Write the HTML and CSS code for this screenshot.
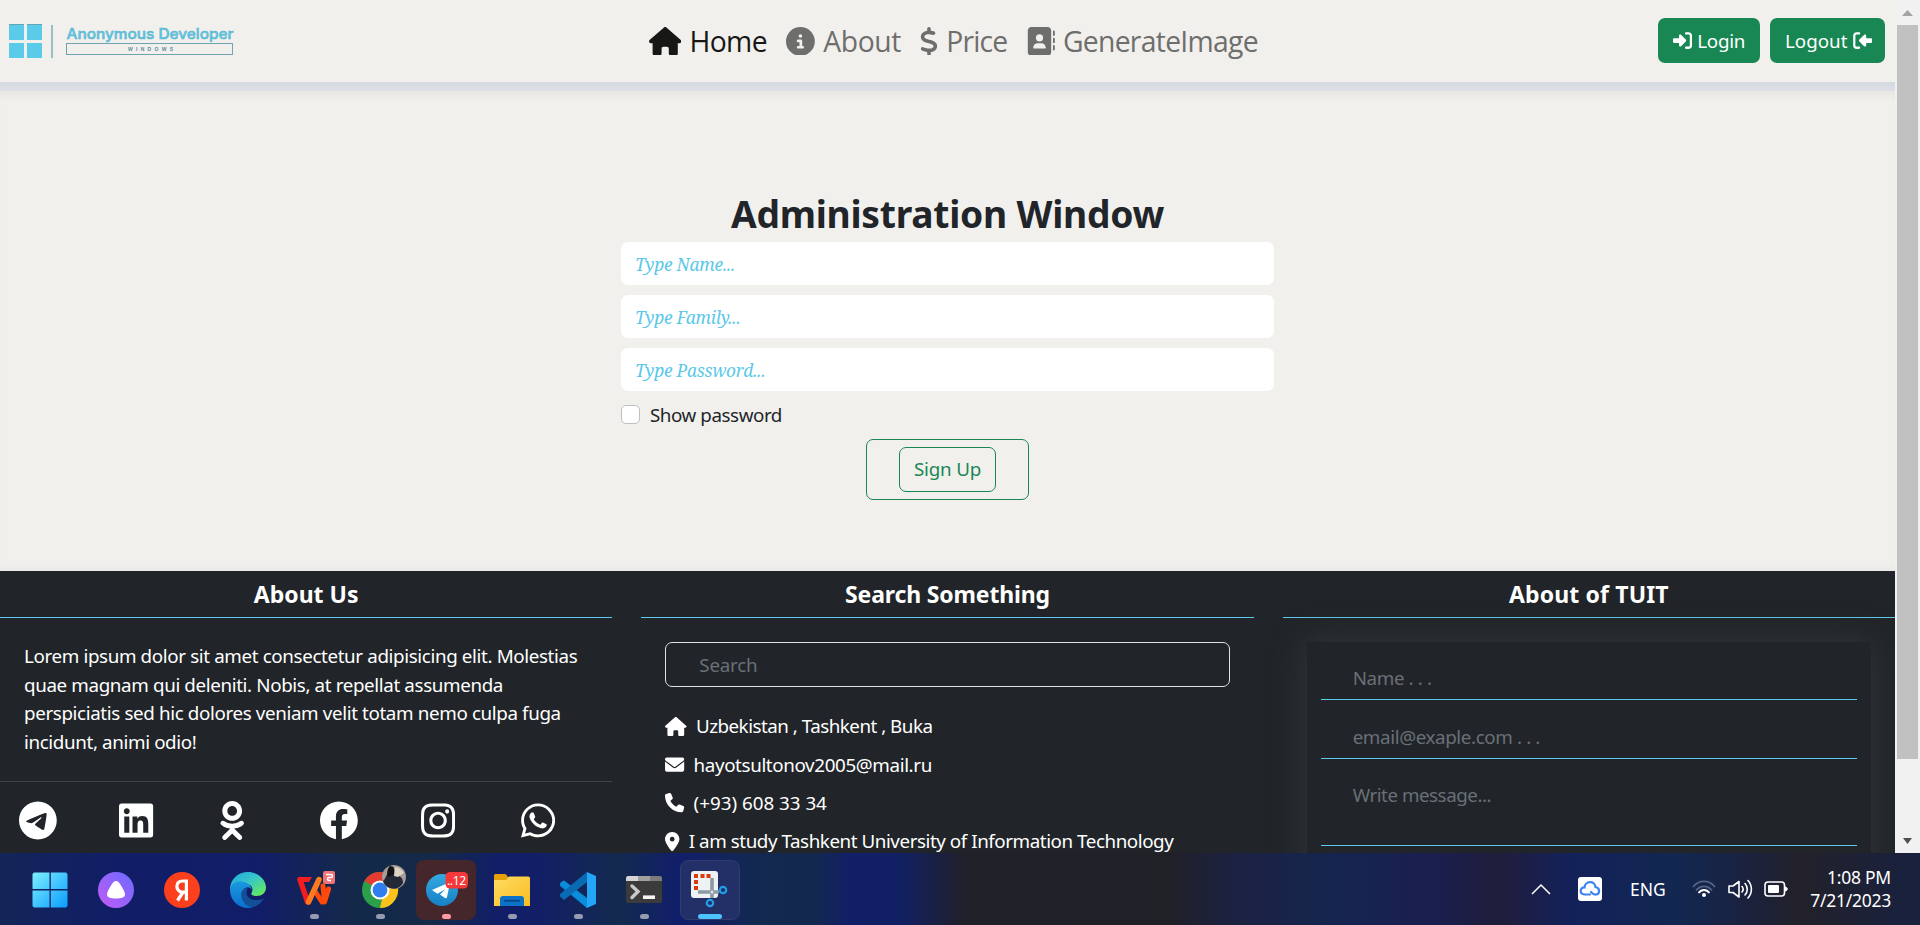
FILE: index.html
```html
<!DOCTYPE html>
<html lang="en">
<head>
<meta charset="utf-8">
<title>Anonymous Developer</title>
<link rel="stylesheet" href="styles.css">
</head>
<body>
<div class="viewport">
<div class="page">
<header class="topbar">
  <a class="logo">
    <svg width="230" height="36" viewBox="0 0 230 36">
      <g fill="#5bcbea"><path d="M0 1h15v15H0zM18 1h15v15H18zM0 19h15v15H0zM18 19h15v15H18z"/></g>
      <path d="M0 .5h15M18 .5h15" stroke="#63a5b6"/>
      <path d="M43 1v33" stroke="#7fb3c1" stroke-width="1.6"/>
      <text class="logo-name" x="57.5" y="15" textLength="167" lengthAdjust="spacingAndGlyphs">Anonymous Developer</text>
      <rect x="57.5" y="19.5" width="166" height="11" fill="none" stroke="#6fa3b1"/>
      <text class="logo-sub" x="119" y="27.2" textLength="45">WINDOWS</text>
    </svg>
  </a>
  <nav class="nav">
    <a class="nav-link active"><svg class="fa" viewBox="0 0 576 512"><path d="M575.8 255.5c0 18-15 32.1-32 32.1h-32l.7 160.2c0 2.7-.2 5.4-.5 8.1V472c0 22.1-17.9 40-40 40H456c-1.1 0-2.2 0-3.3-.1c-1.4 .1-2.8 .1-4.2 .1H416 392c-22.1 0-40-17.9-40-40V448 384c0-17.700-14.300-32-32-32H256c-17.700 0-32 14.300-32 32v64 24c0 22.100-17.900 40-40 40H160 128.100c-1.500 0-3-.1-4.500-.2c-1.200 .1-2.400 .2-3.600 .2H104c-22.100 0-40-17.900-40-40V360c0-.9 0-1.900 .1-2.800V287.600H32c-18 0-32-14-32-32.100c0-9 3-17 10-24L266.400 8c7-7 15-8 22-8s15 2 21 7L564.800 231.500c8 7 12 15 11 24z"/></svg><span class="t-home">Home</span></a>
    <a class="nav-link"><svg class="fa" viewBox="0 0 512 512"><path d="M256 512A256 256 0 1 0 256 0a256 256 0 1 0 0 512zM216 336h24V272H216c-13.300 0-24-10.700-24-24s10.700-24 24-24h48c13.300 0 24 10.700 24 24v88h8c13.300 0 24 10.700 24 24s-10.700 24-24 24H216c-13.300 0-24-10.700-24-24s10.700-24 24-24zm40-208a32 32 0 1 1 0 64 32 32 0 1 1 0-64z"/></svg><span class="t-about">About</span></a>
    <a class="nav-link"><svg class="fa" viewBox="0 0 320 512"><path d="M160 0c17.700 0 32 14.300 32 32V67.700c1.600 .2 3.100 .4 4.700 .7c.4 .1 .7 .1 1.100 .2l48 8.800c17.400 3.200 28.900 19.900 25.700 37.200s-19.900 28.900-37.200 25.700l-47.500-8.700c-31.300-4.600-58.900-1.500-78.300 6.200s-27.200 18.300-29 28.100c-2 10.700-.5 16.700 1.200 20.400c1.800 3.900 5.500 8.300 12.800 13.200c16.300 10.700 41.300 17.700 73.700 26.300l2.900 .8c28.600 7.600 63.600 16.800 89.600 33.800c14.200 9.300 27.600 21.900 35.900 39.500c8.500 17.900 10.300 37.900 6.400 59.200c-6.900 38-33.100 63.400-65.600 76.700c-13.700 5.600-28.600 9.200-44.400 11V480c0 17.700-14.300 32-32 32s-32-14.300-32-32V445.100c-.4-.1-.9-.1-1.300-.2l-.2 0 0 0c-24.400-3.800-64.500-14.300-91.500-26.300c-16.100-7.200-23.400-26.100-16.200-42.200s26.100-23.400 42.200-16.200c20.900 9.300 55.300 18.500 75.200 21.600c31.900 4.700 58.200 2 76-5.300c16.900-6.900 24.600-16.900 26.800-28.900c1.900-10.600 .4-16.700-1.300-20.400c-1.900-4-5.600-8.400-13-13.300c-16.400-10.700-41.500-17.700-74-26.300l-2.800-.7 0 0C119.400 279.300 84.400 270 58.400 253c-14.200-9.300-27.500-22-35.800-39.600c-8.400-17.900-10.100-37.900-6.100-59.200C23.700 116 52.300 91.200 84.800 78.300c13.300-5.300 27.900-8.900 43.200-11V32c0-17.700 14.300-32 32-32z"/></svg><span class="t-price">Price</span></a>
    <a class="nav-link"><svg class="fa" viewBox="0 0 512 512"><path d="M96 0C60.700 0 32 28.700 32 64V448c0 35.300 28.700 64 64 64H384c35.300 0 64-28.700 64-64V64c0-35.300-28.700-64-64-64H96zM208 288h64c44.200 0 80 35.800 80 80c0 8.800-7.200 16-16 16H144c-8.800 0-16-7.200-16-16c0-44.200 35.800-80 80-80zm-32-96a64 64 0 1 1 128 0 64 64 0 1 1 -128 0zM512 80c0-8.800-7.200-16-16-16s-16 7.200-16 16v64c0 8.800 7.200 16 16 16s16-7.200 16-16V80zM496 192c-8.800 0-16 7.200-16 16v64c0 8.800 7.200 16 16 16s16-7.200 16-16V208c0-8.800-7.200-16-16-16zm16 144c0-8.800-7.200-16-16-16s-16 7.200-16 16v64c0 8.800 7.200 16 16 16s16-7.200 16-16V336z"/></svg><span class="t-gen">GenerateImage</span></a>
  </nav>
  <div class="auth">
    <a class="btn btn-login"><svg class="fa" viewBox="0 0 512 512"><path d="M217.900 105.900L340.700 228.700c7.200 7.200 11.300 17.100 11.300 27.300s-4.100 20.100-11.300 27.300L217.900 406.100c-6.400 6.400-15 9.900-24 9.900c-18.700 0-33.900-15.200-33.900-33.900l0-62.100L32 320c-17.700 0-32-14.300-32-32l0-64c0-17.700 14.300-32 32-32l128 0 0-62.100c0-18.700 15.200-33.900 33.900-33.900c9 0 17.600 3.600 24 9.900zM352 416l64 0c17.700 0 32-14.300 32-32l0-256c0-17.700-14.300-32-32-32l-64 0c-17.700 0-32-14.300-32-32s14.300-32 32-32l64 0c53 0 96 43 96 96l0 256c0 53-43 96-96 96l-64 0c-17.700 0-32-14.300-32-32s14.300-32 32-32z"/></svg><span class="t-login">Login</span></a>
    <a class="btn btn-logout"><span>Logout</span><svg class="fa flip" viewBox="0 0 512 512"><path d="M217.900 105.900L340.700 228.700c7.200 7.200 11.300 17.100 11.300 27.300s-4.100 20.100-11.300 27.300L217.900 406.100c-6.400 6.400-15 9.900-24 9.900c-18.700 0-33.900-15.200-33.900-33.900l0-62.100L32 320c-17.700 0-32-14.300-32-32l0-64c0-17.700 14.300-32 32-32l128 0 0-62.100c0-18.700 15.200-33.900 33.900-33.900c9 0 17.600 3.600 24 9.900zM352 416l64 0c17.700 0 32-14.300 32-32l0-256c0-17.700-14.300-32-32-32l-64 0c-17.700 0-32-14.300-32-32s14.300-32 32-32l64 0c53 0 96 43 96 96l0 256c0 53-43 96-96 96l-64 0c-17.700 0-32-14.300-32-32s14.300-32 32-32z"/></svg></a>
  </div>
</header>

<main class="main">
  <form class="signup">
    <h1>Administration Window</h1>
    <input class="field" type="text" placeholder="Type Name...">
    <input class="field" type="text" placeholder="Type Family...">
    <input class="field" type="text" placeholder="Type Password...">
    <label class="check"><span class="box"></span><span class="check-text">Show password</span></label>
    <div class="signup-outer"><span class="signup-inner">Sign Up</span></div>
  </form>
</main>

<footer class="footer">
  <section class="col">
    <h2>About Us</h2>
    <p class="lorem">Lorem ipsum dolor sit amet consectetur adipisicing elit. Molestias<br>quae magnam qui deleniti. Nobis, at repellat assumenda<br>perspiciatis sed hic dolores veniam velit totam nemo culpa fuga<br>incidunt, animi odio!</p>
    <div class="social">
      <svg class="fa" viewBox="0 0 496 512"><path d="M248,8C111.033,8,0,119.033,0,256S111.033,504,248,504,496,392.967,496,256,384.967,8,248,8ZM362.952,176.660c-3.732,39.215-19.881,134.378-28.100,178.300-3.476,18.584-10.322,24.816-16.948,25.425-14.400,1.326-25.338-9.517-39.287-18.661-21.827-14.308-34.158-23.215-55.346-37.177-24.485-16.135-8.612-25,5.342-39.500,3.652-3.793,67.107-61.510,68.335-66.746.153-.655.3-3.100-1.154-4.384s-3.590-.849-5.135-.5q-3.283.746-104.608,69.142-14.845,10.194-26.894,9.934c-8.855-.191-25.888-5.006-38.551-9.123-15.531-5.048-27.875-7.717-26.800-16.291q.84-6.700,18.450-13.700,108.446-47.248,144.628-62.300c68.872-28.647,83.183-33.623,92.511-33.789,2.052-.034,6.639.474,9.610,2.885a10.452,10.452,0,0,1,3.530,6.716A43.765,43.765,0,0,1,362.952,176.660Z"/></svg>
      <svg class="fa" viewBox="0 0 448 512"><path d="M416 32H31.900C14.300 32 0 46.500 0 64.300v383.400C0 465.500 14.300 480 31.900 480H416c17.600 0 32-14.500 32-32.300V64.300c0-17.800-14.400-32.300-32-32.300zM135.400 416H69V202.200h66.500V416zm-33.200-243c-21.300 0-38.500-17.300-38.500-38.500S80.900 96 102.200 96c21.200 0 38.500 17.300 38.500 38.500 0 21.300-17.200 38.500-38.500 38.500zm282.100 243h-66.400V312c0-24.800-.5-56.700-34.500-56.700-34.600 0-39.900 27-39.900 54.900V416h-66.400V202.200h63.700v29.200h.9c8.900-16.800 30.600-34.500 62.900-34.500 67.200 0 79.700 44.300 79.700 101.900V416z"/></svg>
      <svg class="fa" viewBox="0 0 320 512"><path d="M275.100 334c-27.400 17.400-65.100 24.300-90 26.900l20.900 20.600 76.300 76.300c27.900 28.600-17.500 73.300-45.700 45.700-19.100-19.400-47.100-47.400-76.300-76.600L84 503.400c-28.200 27.500-73.600-17.600-45.400-45.700 19.400-19.400 47.100-47.400 76.300-76.300l20.600-20.600c-24.600-2.600-62.900-9.100-90.600-26.900-32.600-21-46.900-33.300-34.300-59 7.400-14.600 27.700-26.900 54.600-5.700 0 0 36.300 28.900 94.900 28.900s94.900-28.900 94.900-28.900c26.900-21.100 47.100-8.900 54.600 5.700 12.400 25.700-1.900 38-34.500 59.100zM30.300 129.700C30.300 58 88.600 0 160 0s129.700 58 129.700 129.700c0 71.400-58.300 129.400-129.700 129.400s-129.700-58-129.700-129.400zm66 0c0 35.100 28.600 63.700 63.700 63.700s63.700-28.600 63.700-63.700c0-35.400-28.600-64-63.700-64s-63.700 28.600-63.700 64z"/></svg>
      <svg class="fa" viewBox="8 0 496 512"><path d="M504 256C504 119 393 8 256 8S8 119 8 256c0 123.780 90.690 226.380 209.250 245V327.690h-63V256h63v-54.640c0-62.150 37-96.480 93.670-96.480 27.140 0 55.520 4.840 55.520 4.840v61h-31.280c-30.800 0-40.410 19.120-40.410 38.730V256h68.780l-11 71.690h-57.780V501C413.310 482.380 504 379.780 504 256z"/></svg>
      <svg class="fa" viewBox="0 0 448 512"><path d="M224.100 141c-63.600 0-114.900 51.300-114.900 114.900s51.300 114.900 114.900 114.900S339 319.500 339 255.900 287.700 141 224.100 141zm0 189.600c-41.100 0-74.700-33.500-74.700-74.700s33.500-74.700 74.700-74.700 74.700 33.500 74.700 74.700-33.600 74.700-74.700 74.700zm146.400-194.300c0 14.900-12 26.800-26.800 26.800-14.900 0-26.800-12-26.800-26.800s12-26.800 26.800-26.800 26.800 12 26.800 26.800zm76.100 27.200c-1.700-35.900-9.900-67.700-36.200-93.900-26.200-26.200-58-34.400-93.900-36.200-37-2.100-147.900-2.100-184.900 0-35.800 1.700-67.600 9.900-93.900 36.100s-34.400 58-36.200 93.900c-2.100 37-2.100 147.900 0 184.900 1.700 35.900 9.900 67.700 36.200 93.900s58 34.400 93.900 36.200c37 2.100 147.900 2.100 184.900 0 35.900-1.700 67.700-9.900 93.900-36.200 26.200-26.200 34.400-58 36.200-93.900 2.100-37 2.100-147.800 0-184.800zM398.800 388c-7.800 19.600-22.900 34.700-42.600 42.600-29.500 11.700-99.500 9-132.100 9s-102.700 2.600-132.100-9c-19.600-7.800-34.700-22.900-42.600-42.600-11.700-29.500-9-99.500-9-132.100s-2.600-102.700 9-132.100c7.800-19.600 22.900-34.700 42.600-42.600 29.500-11.700 99.500-9 132.100-9s102.700-2.600 132.100 9c19.600 7.800 34.700 22.900 42.600 42.600 11.700 29.500 9 99.500 9 132.100s2.700 102.700-9 132.100z"/></svg>
      <svg class="fa" viewBox="0 0 448 512"><path d="M380.900 97.100C339 55.100 283.200 32 223.900 32c-122.400 0-222 99.600-222 222 0 39.100 10.200 77.300 29.600 111L0 480l117.700-30.900c32.400 17.700 68.900 27 106.100 27h.1c122.300 0 224.100-99.600 224.100-222 0-59.300-25.200-115-67.100-157zm-157 341.600c-33.200 0-65.700-8.900-94-25.700l-6.700-4-69.800 18.300L72 359.200l-4.400-7c-18.500-29.400-28.200-63.300-28.200-98.200 0-101.700 82.800-184.500 184.600-184.500 49.300 0 95.600 19.200 130.400 54.100 34.800 34.900 56.200 81.200 56.100 130.500 0 101.800-84.900 184.600-186.600 184.600zm101.200-138.200c-5.500-2.800-32.800-16.200-37.900-18-5.100-1.900-8.800-2.800-12.500 2.800-3.700 5.600-14.300 18-17.600 21.800-3.200 3.700-6.500 4.200-12 1.400-32.600-16.300-54-29.100-75.500-66-5.700-9.800 5.700-9.100 16.300-30.300 1.800-3.700.9-6.900-.5-9.700-1.400-2.800-12.500-30.100-17.100-41.200-4.500-10.800-9.100-10.500-12.500-10.500-3.200-.2-6.900-.2-10.600-.2-3.700 0-9.700 1.400-14.800 6.900-5.100 5.600-19.400 19-19.400 46.300 0 27.300 19.900 53.700 22.600 57.400 2.800 3.700 39.100 59.700 94.800 83.800 35.200 15.200 49 16.500 66.600 13.900 10.700-1.600 32.800-13.400 37.400-26.400 4.600-13 4.600-24.300 3.200-26.400-1.300-2.500-5-3.900-10.500-6.600z"/></svg>
    </div>
  </section>
  <section class="col">
    <h2 class="h-search">Search Something</h2>
    <div class="col-body">
      <input class="search" type="text" placeholder="Search">
      <ul class="contacts">
        <li><svg class="fa" viewBox="0 0 576 512"><path d="M575.800 255.500c0 18-15 32.100-32 32.100h-32l.7 160.200c0 2.700-.2 5.400-.5 8.100V472c0 22.100-17.900 40-40 40H392c-22.100 0-40-17.900-40-40V384c0-17.700-14.300-32-32-32H256c-17.700 0-32 14.300-32 32v88c0 22.100-17.900 40-40 40H104c-22.100 0-40-17.900-40-40V287.600H32c-18 0-32-14-32-32.100c0-9 3-17 10-24L266.400 8c7-7 15-8 22-8s15 2 21 7L564.800 231.500c8 7 12 15 11 24z"/></svg><span class="c-addr">Uzbekistan , Tashkent , Buka</span></li>
        <li><svg class="fa" viewBox="0 0 512 512"><path d="M48 64C21.500 64 0 85.500 0 112c0 15.100 7.100 29.300 19.200 38.400L236.800 313.600c11.400 8.500 27 8.500 38.400 0L492.800 150.400c12.100-9.100 19.200-23.300 19.200-38.400c0-26.500-21.500-48-48-48H48zM0 176V384c0 35.300 28.700 64 64 64H448c35.300 0 64-28.700 64-64V176L294.400 339.200c-22.800 17.100-54 17.100-76.800 0L0 176z"/></svg><span>hayotsultonov2005@mail.ru</span></li>
        <li><svg class="fa" viewBox="0 0 512 512"><path d="M164.900 24.600c-7.700-18.600-28-28.500-47.400-23.200l-88 24C12.100 30.200 0 46 0 64C0 311.400 200.600 512 448 512c18 0 33.800-12.100 38.600-29.500l24-88c5.300-19.400-4.600-39.700-23.200-47.400l-96-40c-16.300-6.800-35.200-2.100-46.300 11.600L304.700 368C234.300 334.700 177.300 277.700 144 207.300L193.300 167c13.700-11.200 18.400-30 11.600-46.300l-40-96z"/></svg><span class="c-phone">(+93) 608 33 34</span></li>
        <li><svg class="fa" viewBox="0 0 384 512"><path d="M215.700 499.200C267 435 384 279.400 384 192C384 86 298 0 192 0S0 86 0 192c0 87.400 117 243 168.300 307.200c12.300 15.300 35.100 15.300 47.400 0zM192 128a64 64 0 1 1 0 128 64 64 0 1 1 0-128z"/></svg><span class="c-uni">I am study Tashkent University of Information Technology</span></li>
      </ul>
    </div>
  </section>
  <section class="col">
    <h2 class="h-tuit">About of TUIT</h2>
    <div class="col-body">
      <form class="message">
        <input class="line" type="text" placeholder="Name . . .">
        <input class="line" type="text" placeholder="email@exaple.com . . .">
        <textarea class="line area" placeholder="Write message..."></textarea>
      </form>
    </div>
  </section>
</footer>
</div>
<div class="scrollbar">
  <svg width="25" height="25" viewBox="0 0 25 25"><path d="M7 16l5.500-6 5.500 6z" fill="#a3a3a3"/></svg>
  <div class="thumb"></div>
  <svg class="down" width="25" height="25" viewBox="0 0 25 25"><path d="M8 10h9l-4.500 6z" fill="#505050"/></svg>
</div>
</div>

<div class="taskbar">
  <svg width="0" height="0" class="defs"><defs>
    <linearGradient id="win" x1="0" y1="0" x2="1" y2="1"><stop offset="0" stop-color="#7df0ff"/><stop offset="1" stop-color="#0a9cff"/></linearGradient>
    <linearGradient id="alice" x1="1" y1="0" x2="0" y2="1"><stop offset="0" stop-color="#6a6bff"/><stop offset="1" stop-color="#c15bf5"/></linearGradient>
    <linearGradient id="edge1" x1="0" y1="0" x2="1" y2="1"><stop offset="0" stop-color="#1fa6dc"/><stop offset=".45" stop-color="#36c6c9"/><stop offset="1" stop-color="#6df04a"/></linearGradient>
    <linearGradient id="edge2" x1="0" y1="0" x2="0" y2="1"><stop offset="0" stop-color="#1a9ade"/><stop offset="1" stop-color="#0a6fd0"/></linearGradient>
    <linearGradient id="tg" x1="0" y1="0" x2="0" y2="1"><stop offset="0" stop-color="#33a9e2"/><stop offset="1" stop-color="#1780c4"/></linearGradient>
    <linearGradient id="fold" x1="0" y1="0" x2="1" y2="1"><stop offset="0" stop-color="#ffdc63"/><stop offset="1" stop-color="#f9bc22"/></linearGradient>
  </defs></svg>
  <div class="apps">
    <div class="app"><svg width="36" height="36"><path fill="url(#win)" d="M2 0.500h15.500V17H0.500V2zM18.800 0.500H34l1.500 1.500v15H18.800zM0.500 18.500h17v17H2L0.500 34zM18.800 18.500h16.700V34L34 35.500H18.800z"/></svg></div>
    <div class="app"><svg width="36" height="36"><circle cx="18" cy="18" r="18" fill="url(#alice)"/><path d="M18 9c2 0 3 1.200 5 4.500s4 6.500 4 9c0 3-4 4-9 4s-9-1-9-4c0-2.500 2-5.700 4-9S16 9 18 9z" fill="#fff"/></svg></div>
    <div class="app"><svg width="36" height="36"><circle cx="18" cy="18" r="18" fill="#fc3f1d"/><path d="M22.400 7.500v21M22.400 9h-3.500c-4 0-6 2.300-6 5.500 0 3 1.700 4.600 4.500 5.800M19.500 19.500l-6 9M17.400 20.200h5" fill="none" stroke="#fff" stroke-width="3.200"/></svg></div>
    <div class="app"><svg width="36" height="36"><path d="M0 18C0 7 8 0 18 0s18 7.500 18 15.500c0 5-4 8.500-9.500 8.500-4 0-6-1.500-5-3 2-4 1-8-5-9C9 10 2 12 0 18z" fill="url(#edge1)"/><path d="M0 18C1 11 7 8.500 12 9.500c6 .8 9.500 4.500 9.700 8.500-1-3-5-4-7-1-3 5 0 15 8 18-2 1-4 1-5 1C8 36 0 28 0 18z" fill="url(#edge2)"/><path d="M14 16.500C8 22 12 33 22 35.500c5-1 10-5 12-9-8 3.500-17 1-17.500-5.500 0-2 .5-3.500 1.500-4.500-1.500-.5-3-.5-4 0z" fill="#124f96"/></svg></div>
    <div class="app"><svg width="44" height="40" viewBox="-4 -2 44 40"><path d="M4 7.500L11.500 30" stroke="#f31c1e" stroke-width="5.500" stroke-linecap="round"/><path d="M3 5h13l-3 5H5z" fill="#f31c1e"/><path d="M27 14L28.500 30L32.500 17" fill="none" stroke="#ff4a0c" stroke-width="5" stroke-linecap="round" stroke-linejoin="round"/><path d="M19.500 20L26 30" stroke="#ff4a0c" stroke-width="5" stroke-linecap="round"/><path d="M12.500 30L23 7.500" stroke="#ff7a1c" stroke-width="5.500" stroke-linecap="round"/><rect x="27" y="-1" width="12" height="13" rx="2" fill="#ee7476"/><path d="M30 2.500h5c2 0 2 3 0 3h-2c-2 0-2 3 0 3h2" fill="none" stroke="#fff" stroke-width="1.400"/></svg><i class="dot"></i></div>
    <div class="app"><svg width="52" height="50" viewBox="-8 -7 52 50"><circle cx="18" cy="18" r="18" fill="#2c9f4b"/><path d="M18 18L2.400 9A18 18 0 0 1 33.600 9z" fill="#e23c31"/><path d="M18 18L33.600 9A18 18 0 0 1 18 36l2-9z" fill="#fcc21b"/><circle cx="18" cy="18" r="9.500" fill="#fff"/><circle cx="18" cy="18" r="7.400" fill="#2f7def"/><circle cx="32" cy="5" r="12" fill="#a89c96"/><path d="M21 9c3-2 4-9 8-14 3 1 4 4 4 8 5 0 8 3 8 8-3 5-8 7-13 5-4-1-6-4-7-7z" fill="#222835"/><path d="M28-6c4 0 5 3 4 8l-5 3c-3 0-2-9 1-11z" fill="#101215"/><path d="M33-5c4 0 7 3 9 6l-6 4-4-1z" fill="#ddd3c5"/></svg><i class="dot"></i></div>
    <div class="app app-alert"><svg width="44" height="40" viewBox="-2 -3 44 40"><circle cx="16" cy="17" r="16" fill="url(#tg)"/><path d="M6 17l16-7c1.400-.5 2 .2 1.700 1.500L21 24c-.3 1.200-1 1.500-2 .9l-5-3.500 5.500-5.500-8 4.800z" fill="#fff"/><rect x="19.500" y="-1" width="22.500" height="16.500" rx="4.500" fill="#f5383a"/><text class="badge" x="21" y="11.500" textLength="19">..12</text></svg><i class="dot dot-pink"></i></div>
    <div class="app"><svg width="36" height="36"><path d="M0 4c0-1.500.8-2 2-2h9c2 0 2.500 4 5 4v6H0z" fill="#e3a008"/><path d="M0 8h12l3-3.500h19c1.500 0 2 .8 2 2V34H0z" fill="url(#fold)"/><path d="M6 34v-7c0-2 1-3 3-3h18c2 0 3 1 3 3v7z" fill="#0c72c6"/><path d="M11 28.800h14" stroke="#08468e" stroke-width="2" stroke-linecap="round"/></svg><i class="dot"></i></div>
    <div class="app"><svg width="36" height="36"><path d="M27 10v16L4 8.500 0 11v3l27 22z" fill="#0a86d1"/><path d="M0 11.500L3.500 8.500 31 30l-4 6z" fill="#0a8ddb"/><path d="M27 0v10L4 28 0 24.500V22z" fill="#0a6bb3"/><path d="M27 0l9 4v28l-9 4z" fill="#25a5f5"/></svg><i class="dot"></i></div>
    <div class="app"><svg width="36" height="36"><path d="M0 6.500C0 5 .6 4 2 4h10v6H0z" fill="#d5d5d5"/><path d="M12 4h12v6H12z" fill="#a1a1a1"/><path d="M24 4h10c1.400 0 2 1 2 2.500V10H24z" fill="#7c7c7c"/><path d="M0 9h36v20c0 1.500-.6 2-2 2H2c-1.400 0-2-.5-2-2z" fill="#3b3b3b"/><path d="M6 14l6 5.500-6 6" fill="none" stroke="#c9c9c9" stroke-width="3.400" stroke-linecap="round"/><path d="M17 25.200h12" stroke="#f4f4f4" stroke-width="3.600"/></svg><i class="dot"></i></div>
    <div class="app app-active"><svg width="40" height="38" viewBox="-1 0 40 38"><rect x="0" y="0" width="27" height="27" rx="3" fill="#eef2f5"/><path d="M3 3h4v4H3zM9.500 3h4v4h-4zM15.500 3h4v4h-4zM3 9h4v4H3zM3 15h4v4H3z" fill="#d63c0c"/><path d="M21 7v20M7 21h21" stroke="#8c9aa3" stroke-width="3.600"/><circle cx="21" cy="21" r="1.500" fill="#dfe5e8"/><circle cx="32" cy="19" r="3.200" fill="none" stroke="#1f9fe8" stroke-width="2.200"/><circle cx="19" cy="32" r="3.200" fill="none" stroke="#1f9fe8" stroke-width="2.200"/></svg><i class="dot dot-blue"></i></div>
  </div>
  <div class="tray">
    <svg class="tray-up" width="20" height="12"><path d="M1 11l9-9 9 9" fill="none" stroke="#fff" stroke-width="1.500"/></svg>
    <svg class="tray-cloud" width="24" height="24"><rect width="24" height="24" rx="3" fill="#fff"/><path d="M12 17.500H6.500C1 17 2 10 6.500 10.500 7 3.500 17 3.500 17.500 10c5 1 4.500 7 .5 7.500-2 .3-3.500-.8-5-2.500" fill="none" stroke="#3b82f0" stroke-width="2.200" stroke-linecap="round"/></svg>
    <span class="lang">ENG</span>
    <svg class="tray-wifi" width="24" height="18"><g fill="none" stroke-width="1.800"><path d="M1 7c6-7.500 16-7.500 22 0" stroke="#52648a"/><path d="M4 10.500c4.500-5.500 11.500-5.500 16 0" stroke="#52648a"/><path d="M6.500 13c3-4 8-4 11 0" stroke="#fff"/></g><circle cx="12" cy="15" r="2" fill="#fff"/></svg>
    <svg class="tray-vol" width="25" height="20"><g fill="none" stroke="#fff" stroke-width="1.600" stroke-linejoin="round" stroke-linecap="round"><path d="M1 7v6.500h4l6 4.500V2.500L5 7z"/><path d="M14 7.500c1.300 1.500 1.300 4 0 5.500M17 4.500c3 3 3 8.500 0 11.500M20 1.500c4.500 5 4.500 12.500 0 17.500"/></g></svg>
    <svg class="tray-bat" width="25" height="16"><rect x="1" y="1" width="19.500" height="14" rx="3" fill="none" stroke="#fff" stroke-width="1.600"/><rect x="4" y="4" width="11" height="8" rx="1" fill="#fff"/><path d="M21 6c3 0 3 4 0 4z" fill="#fff" stroke="#fff"/></svg>
    <div class="clock"><span>1:08 PM</span><span>7/21/2023</span></div>
  </div>
</div>
</body>
</html>
```

FILE: styles.css
```css
* { box-sizing: border-box; }
body {
  margin: 0;
  width: 1920px;
  height: 925px;
  overflow: hidden;
  display: flex;
  flex-direction: column;
  font-family: "Noto Sans", "Open Sans", sans-serif;
  font-size: 18.8px;
  letter-spacing: -.37px;
  color: #212529;
}
.viewport { display: flex; height: 853px; overflow: hidden; }
.page { width: 1895px; height: 853px; overflow: hidden; display: flex; flex-direction: column; background: #f2f0ed; }
.fa { height: 1em; width: auto; fill: currentColor; flex: none; display: block; }
span { white-space: nowrap; }

/* Top bar */
.topbar {
  height: 82px;
  flex: none;
  display: grid;
  grid-template-columns: 649px 1fr auto;
  align-items: center;
  padding: 0 10px 0 0;
  background: #f2f0ed;
}
.logo { padding-left: 9px; height: 34px; }
.logo svg { display: block; }
.logo-name { font: 500 14.500px Inter, sans-serif; letter-spacing: 0; fill: #5bcbea; stroke: #5bb0c8; stroke-width: .5px; }
.logo-sub { font: 700 5px "Liberation Sans", sans-serif; letter-spacing: 0; fill: #568d9c; }
.nav { display: flex; gap: 19px; font-size: 28.800px; color: #6e6e6c; }
.nav-link { display: flex; align-items: center; gap: 8px; line-height: 41px; font-family: "Open Sans", sans-serif; }
.nav-link span { font-size: 28.300px; }
.nav-link.active { color: #171815; }
.t-home { width: 78px; letter-spacing: -.6px; }
.t-about { width: 78px; letter-spacing: -.35px; }
.t-price { width: 61px; letter-spacing: -.8px; }
.t-gen { letter-spacing: -.7px; }
.auth { display: flex; gap: 10px; margin-top: -1px; }
.btn {
  height: 45px;
  display: flex;
  align-items: center;
  gap: 5px;
  padding: 0 15px;
  border-radius: 7px;
  background: #198754;
  color: #fff;
  letter-spacing: 0;
}
.btn .fa { font-size: 19.200px; }
.btn-login { width: 102px; }
.t-login { letter-spacing: -.25px; }
.btn-logout { width: 115px; }
.flip { transform: scaleX(-1); }

/* Sign-up form */
.main {
  height: 489px;
  flex: none;
  padding-top: 109px;
  background: linear-gradient(#d5d9e0 0, #dde0e4 9px, #e7e6e3 9px, #f2f0ed 19px) top / 100% 19px no-repeat;
  box-shadow: inset 0 -8px 8px -6px #e3e6e4;
}
.signup { width: 653px; margin: 0 auto; display: flex; flex-direction: column; }
h1 { margin: 0 0 5px; height: 46px; font-size: 37.200px; line-height: 46px; font-weight: 700; letter-spacing: -.25px; text-align: center; white-space: nowrap; }
.field {
  height: 43px;
  margin: 0 0 10px;
  padding: 1px 14px 0;
  border: 0;
  border-radius: 7px;
  background: #fff;
  font: italic 17.300px "Noto Serif", "Liberation Serif", serif;
  letter-spacing: -.25px;
}
.field::placeholder { color: #5bc8e8; opacity: 1; }
.check { display: flex; align-items: center; gap: 10px; height: 27px; }
.check-text { letter-spacing: -.44px; }
.box { width: 19px; height: 19px; border: 1px solid #bcbfc1; border-radius: 5px; background: #fff; }
.signup-outer {
  align-self: center;
  width: 163px;
  height: 61px;
  margin-top: 11px;
  display: flex;
  align-items: center;
  justify-content: center;
  border: 1px solid #198754;
  border-radius: 7px;
}
.signup-inner { width: 97px; height: 45px; line-height: 43px; text-align: center; border: 1px solid #198754; border-radius: 7px; color: #198754; letter-spacing: -.2px; }

/* Footer */
.footer { flex: 1; min-height: 0; display: grid; grid-template-columns: repeat(3, minmax(0, 1fr)); gap: 29px; background: #212529; color: #fff; overflow: hidden; }
h2 { margin: 0; height: 47px; border-bottom: 1px solid #5bcbea; font-size: 23px; line-height: 47px; font-weight: 700; letter-spacing: 0; text-align: center; }
.h-search { letter-spacing: -.15px; }
.h-tuit { letter-spacing: .15px; }
.col-body { padding: 24px; }
.lorem { margin: 0; padding: 24px 0 24px 24px; height: 164px; border-bottom: 1px solid #404448; line-height: 28.700px; white-space: nowrap; }
.social { display: grid; grid-template-columns: repeat(6, 100.400px); padding: 19px 0 0 19px; font-size: 39px; }
.search { display: block; width: 565px; height: 45px; padding: 0 33px; border: 1px solid #dee2e6; border-radius: 7px; background: transparent; font: inherit; letter-spacing: -.25px; }
.search::placeholder, .line::placeholder { color: #697077; opacity: 1; }
.contacts { list-style: none; margin: 20px 0 0; padding: 0; }
.contacts li { display: flex; align-items: center; gap: 9px; height: 38.400px; }
.contacts .fa { font-size: 19.200px; }
.c-addr { letter-spacing: -.5px; }
.c-phone { letter-spacing: 0; }
.c-uni { letter-spacing: -.44px; }
.message { height: 300px; padding: 14px; display: flex; flex-direction: column; box-shadow: 0 0 30px #33373b; background: #212529; }
.line { height: 44px; flex: none; margin: 0 0 15px; padding: 0 32px; border: 0; border-bottom: 1px solid #5bcbea; background: transparent; font: inherit; letter-spacing: -.38px; resize: none; }
.area { height: 72px; padding-top: 7px; overflow: hidden; line-height: 28px; letter-spacing: -.48px; }

/* Scrollbar */
.scrollbar { width: 25px; display: flex; flex-direction: column; align-items: center; background: #f1f1f1; }
.scrollbar svg { flex: none; }
.thumb { width: 21px; height: 734px; background: #c1c1c1; }
.down { margin-top: auto; }

/* Taskbar */
.taskbar {
  height: 72px;
  display: flex;
  justify-content: space-between;
  color: #fff;
  letter-spacing: 0;
  background: linear-gradient(90deg, #132558 0, #111e66 110px, #111d68 260px, #14294a 350px, #142a47 430px, #111e68 500px, #121f66 540px, #132a4e 620px, #111e6b 680px, #13294f 760px, #13284f 815px, #111f67 850px, #111f63 900px, #202029 965px, #202027 1170px, #1c2140 1230px, #15254f 1330px, #1a1e50 1430px, #1f1d3b 1500px, #13215a 1570px, #122750 1680px, #1a2240 1740px, #22212a 1800px, #1a213c 1900px);
}
.defs { position: absolute; }
.apps { display: flex; padding: 7px 0 0 20px; gap: 6px; }
.app { position: relative; width: 60px; height: 60px; display: flex; align-items: center; justify-content: center; border-radius: 8px; }
.app-alert { background: #44262b; }
.app-active { background: #232f67; border: 1px solid #313c6d; }
.dot { position: absolute; left: 25.500px; bottom: 1px; width: 9px; height: 5px; border-radius: 3px; background: #959bb1; }
.dot-pink { background: #ff9ba4; }
.dot-blue { left: 17px; bottom: 0; width: 24px; background: #4cc2ff; }
.badge { font: 12px "Noto Sans", sans-serif; fill: #fff; }
.tray { display: flex; align-items: center; padding: 0 29px 0 0; }
.tray-cloud { margin-left: 27px; }
.lang { margin-left: 28px; width: 34px; font-size: 17.500px; }
.tray-wifi { margin-left: 28px; }
.tray-vol { margin-left: 12px; }
.tray-bat { margin-left: 11px; }
.clock { width: 102px; display: flex; flex-direction: column; align-items: flex-end; font-size: 17.500px; line-height: 23.500px; letter-spacing: -.25px; }
```
